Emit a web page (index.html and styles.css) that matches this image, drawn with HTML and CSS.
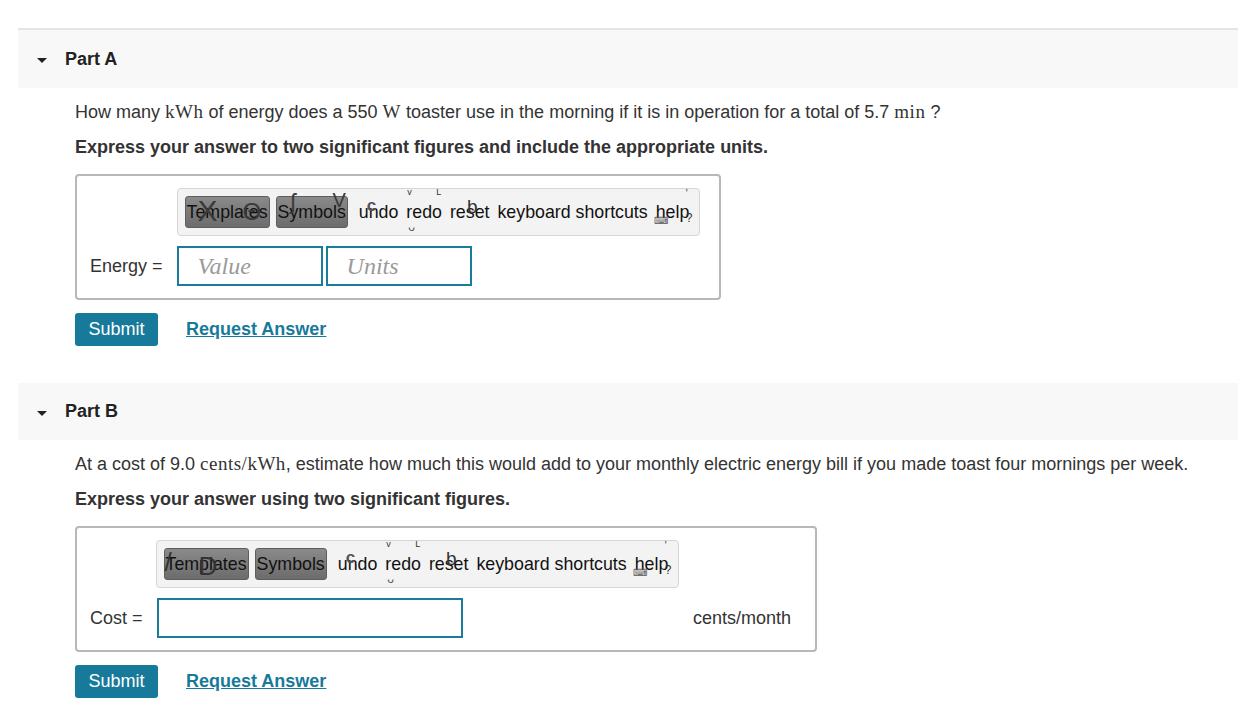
FILE: index.html
```html
<!DOCTYPE html>
<html>
<head>
<meta charset="utf-8">
<link rel="stylesheet" href="styles.css">
</head>
<body>
<div class="page">
  <section class="part first">
    <div class="part-head"><span class="caret"></span><span class="part-title">Part A</span></div>
    <div class="part-body">
      <p class="question">How many <span class="math">kWh</span> of energy does a 550 <span class="math">W</span> toaster use in the morning if it is in operation for a total of 5.7 <span class="math">min</span> ?</p>
      <p class="instr">Express your answer to two significant figures and include the appropriate units.</p>
      <div class="answer-box box-a">
        <div class="grid">
          <div></div>
          <div class="toolbar">
            <span class="tbtn">Templates<i class="ov ov-x">X</i><i class="ov ov-o">Θ</i></span>
            <span class="tbtn sym">Symbols<i class="ov ov-j">ʃ</i><i class="ov ov-v">V</i></span>
            <span class="tword w-undo">undo<i class="ov ov-u">c</i></span>
            <span class="tword w-redo">redo<i class="ov ov-r1">v</i><i class="ov ov-r2">L</i><i class="ov ov-r3">ᴗ</i></span>
            <span class="tword w-reset">reset<i class="ov ov-b">b</i></span>
            <span class="tword">keyboard shortcuts</span>
            <span class="tword w-help">help<i class="ov ov-k">⌨</i><i class="ov ov-q">?</i><i class="ov ov-t">'</i></span>
          </div>
          <label class="lbl">Energy =</label>
          <div class="inputs">
            <div class="field small"><span class="ph">Value</span></div>
            <div class="field small"><span class="ph">Units</span></div>
          </div>
        </div>
      </div>
      <div class="actions">
        <button class="submit">Submit</button>
        <a class="req">Request Answer</a>
      </div>
    </div>
  </section>

  <section class="part second">
    <div class="part-head"><span class="caret"></span><span class="part-title">Part B</span></div>
    <div class="part-body">
      <p class="question">At a cost of 9.0 <span class="math">cents/kWh</span>, estimate how much this would add to your monthly electric energy bill if you made toast four mornings per week.</p>
      <p class="instr">Express your answer using two significant figures.</p>
      <div class="answer-box box-b">
        <div class="grid">
          <div></div>
          <div class="toolbar">
            <span class="tbtn">Templates<i class="ov ov-slash">/</i><i class="ov ov-d">D</i></span>
            <span class="tbtn sym">Symbols</span>
            <span class="tword w-undo">undo<i class="ov ov-u">c</i></span>
            <span class="tword w-redo">redo<i class="ov ov-r1">v</i><i class="ov ov-r2">L</i><i class="ov ov-r3">ᴗ</i></span>
            <span class="tword w-reset">reset<i class="ov ov-b">b</i></span>
            <span class="tword">keyboard shortcuts</span>
            <span class="tword w-help">help<i class="ov ov-k">⌨</i><i class="ov ov-q">?</i><i class="ov ov-t">'</i></span>
          </div>
          <label class="lbl">Cost =</label>
          <div class="inputs">
            <div class="field wide"></div>
            <span class="unit">cents/month</span>
          </div>
        </div>
      </div>
      <div class="actions">
        <button class="submit">Submit</button>
        <a class="req">Request Answer</a>
      </div>
    </div>
  </section>
</div>
</body>
</html>
```

FILE: styles.css
```css
html, body {
  margin: 0;
  padding: 0;
  background: #fff;
}
body {
  font-family: "Liberation Sans", Arial, Helvetica, sans-serif;
  color: #333;
}
.page {
  padding: 28px 0 0 18px;
}
.part.first {
  border-top: 2px solid #e4e4e4;
}
.part.second {
  margin-top: 37px;
}
.part-head {
  height: 58px;
  background: #f8f8f8;
  display: flex;
  align-items: center;
  padding-left: 19px;
}
.second .part-head {
  height: 57px;
}
.caret {
  width: 0;
  height: 0;
  border-left: 5px solid transparent;
  border-right: 5px solid transparent;
  border-top: 5px solid #222;
  margin-top: 3px;
  margin-right: 18px;
}
.part-title {
  font-size: 18px;
  font-weight: bold;
  color: #222;
}
.part-body {
  padding: 12px 0 0 57px;
}
.question {
  margin: 0;
  font-size: 18px;
  line-height: 24px;
  color: #333;
}
.math {
  font-family: "Liberation Serif", "Times New Roman", serif;
  font-size: 19px;
  letter-spacing: 0.5px;
}
.instr {
  margin: 11px 0 0;
  font-size: 18px;
  line-height: 24px;
  font-weight: bold;
  color: #333;
}
.answer-box {
  margin-top: 15px;
  border: 2px solid #b8b8b8;
  border-radius: 4px;
  padding: 12px 13px;
  box-sizing: border-box;
}
.box-a { width: 646px; }
.box-b { width: 742px; }
.grid {
  display: grid;
  grid-template-columns: auto 1fr;
  column-gap: 14px;
  row-gap: 10px;
  align-items: center;
}
.lbl {
  font-size: 18px;
  color: #333;
}
.toolbar {
  justify-self: start;
  width: 523px;
  height: 48px;
  box-sizing: border-box;
  border: 1px solid #d6d6d6;
  border-radius: 4px;
  background: #f3f3f3;
  display: flex;
  align-items: center;
  padding-left: 7px;
  font-size: 17.8px;
  color: #111;
}
.box-b .toolbar {
  margin-left: -1px;
}
.tbtn {
  position: relative;
  height: 32px;
  box-sizing: border-box;
  display: flex;
  align-items: center;
  padding: 0 1px;
  background: linear-gradient(#8a8a8a, #6c6c6c);
  border: 1px solid #5e5e5e;
  border-radius: 3px;
  color: #111;
}
.tbtn.sym {
  margin-left: 6px;
}
.tword {
  position: relative;
  margin-left: 8px;
}
.w-undo {
  margin-left: 11px;
}
.ov {
  position: absolute;
  font-style: normal;
  color: #333;
  pointer-events: none;
}
.ov-x { left: 12px; top: -3px; font-size: 30px; color: #3a3a3a; }
.ov-o { left: 57px; top: 1px; font-size: 24px; color: #3a3a3a; }
.ov-j { left: 14px; top: -8px; font-size: 22px; color: #3a3a3a; }
.ov-v { left: 56px; top: -8px; font-size: 20px; color: #3a3a3a; }
.ov-slash { left: 0px; top: -2px; font-size: 26px; color: #333; }
.ov-d { left: 34px; top: 2px; font-size: 26px; color: #333; }
.ov-u { left: 8px; top: -6px; font-size: 17px; font-weight: bold; color: #555; }
.ov-r1 { left: 1px; top: -15px; font-size: 9px; }
.ov-r2 { left: 30px; top: -15px; font-size: 9px; }
.ov-r3 { left: 2px; top: 18px; font-size: 12px; color: #555; }
.ov-b { left: 17px; top: -6px; font-size: 19px; color: #333; }
.ov-k { left: -2px; top: 13px; font-size: 10px; color: #555; }
.ov-q { left: 30px; top: 9px; font-size: 12px; }
.ov-t { left: 30px; top: -14px; font-size: 10px; }
.inputs {
  display: flex;
  align-items: center;
  gap: 3px;
}
.field {
  height: 40px;
  box-sizing: border-box;
  border: 2px solid #1a7b9b;
  background: #fff;
  display: flex;
  align-items: center;
  padding-left: 19px;
}
.field.small { width: 146px; }
.field.wide { width: 306px; }
.ph {
  font-family: "Liberation Serif", "Times New Roman", serif;
  font-style: italic;
  font-size: 24px;
  color: #9a9a9a;
}
.unit {
  margin-left: auto;
  margin-right: 11px;
  font-size: 18px;
  color: #333;
}
.actions {
  margin-top: 13px;
  display: flex;
  align-items: center;
}
.submit {
  width: 83px;
  height: 33px;
  border: none;
  border-radius: 3px;
  background: #177a9a;
  color: #fff;
  font-family: "Liberation Sans", Arial, sans-serif;
  font-size: 18px;
  padding: 0;
}
.req {
  margin-left: 28px;
  font-size: 18px;
  font-weight: bold;
  color: #177a9a;
  text-decoration: underline;
}
```
